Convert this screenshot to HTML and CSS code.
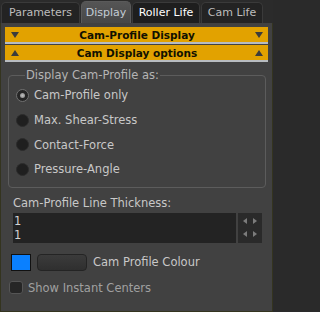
FILE: index.html
```html
<!DOCTYPE html>
<html>
<head>
<meta charset="utf-8">
<link rel="stylesheet" href="styles.css">
</head>
<body>
<div class="window">
  <div class="tabs">
    <div class="tab t-param">Parameters</div>
    <div class="tab t-display active">Display</div>
    <div class="tab t-roller hover">Roller Life</div>
    <div class="tab t-cam">Cam Life</div>
  </div>
  <div class="panel">
    <div class="bar">
      <span class="tri down"></span>
      <span class="bar-title">Cam-Profile Display</span>
      <span class="tri down"></span>
    </div>
    <div class="bar">
      <span class="tri up"></span>
      <span class="bar-title">Cam Display options</span>
      <span class="tri up"></span>
    </div>
    <fieldset class="group">
      <legend>Display Cam-Profile as:</legend>
      <div class="radio-row"><span class="radio checked"></span><span>Cam-Profile only</span></div>
      <div class="radio-row"><span class="radio"></span><span>Max. Shear-Stress</span></div>
      <div class="radio-row"><span class="radio"></span><span>Contact-Force</span></div>
      <div class="radio-row"><span class="radio"></span><span>Pressure-Angle</span></div>
    </fieldset>
    <div class="label">Cam-Profile Line Thickness:</div>
    <div class="spin-row">
      <div class="spin-input">
        <div>1</div>
        <div>1</div>
      </div>
      <div class="spin-buttons">
        <div class="arrows"><span class="arr left"></span><span class="arr right"></span></div>
        <div class="arrows"><span class="arr left"></span><span class="arr right"></span></div>
      </div>
    </div>
    <div class="colour-row">
      <span class="swatch"></span>
      <span class="colour-btn"></span>
      <span class="colour-label">Cam Profile Colour</span>
    </div>
    <div class="check-row">
      <span class="checkbox"></span>
      <span class="check-label">Show Instant Centers</span>
    </div>
  </div>
</div>
</body>
</html>
```
FILE: styles.css
```css
html, body {
  margin: 0;
  padding: 0;
  background: #2a2a2a;
}
body {
  font-family: "DejaVu Sans", sans-serif;
  font-size: 11.5px;
  color: #c8c8c8;
}
.window {
  display: flex;
  flex-direction: column;
  width: 273px;
  height: 312px;
  overflow: hidden;
}
.tabs {
  display: flex;
  height: 23px;
  box-sizing: border-box;
  padding: 2px 0 0 1px;
  gap: 1px;
  background: #2b2b2b;
}
.tab {
  flex: none;
  box-sizing: border-box;
  height: 21px;
  line-height: 20px;
  text-align: center;
  white-space: nowrap;
  font-size: 11px;
  color: #bdbdbd;
  background: #232323;
  border: 1px solid #3a3a3a;
  border-bottom: none;
  border-radius: 5px 5px 0 0;
}
.t-param { width: 79px; }
.t-display { width: 50px; }
.t-roller { width: 68px; }
.t-cam { width: 62px; }
.tab.active {
  height: 22px;
  margin-top: -1px;
  line-height: 21px;
  color: #c4ccd4;
  background: linear-gradient(#555555, #474747);
  border-color: #5a5a5a;
}
.tab.hover {
  color: #ffffff;
  background: #1e1e1e;
}
.panel {
  flex: 1;
  background: #414141;
  border: 1px solid #34341f;
  border-top: none;
  padding: 4px 4px 0 4px;
}
.bar {
  display: flex;
  align-items: center;
  height: 15px;
  background: #e2a200;
  border-bottom: 2px solid #b8bcc0;
  margin-bottom: 1px;
  padding: 0 5px 0 6px;
}
.bar-title {
  flex: 1;
  text-align: center;
  font-weight: bold;
  font-size: 10.5px;
  color: #111100;
}
.tri {
  width: 0;
  height: 0;
  border-left: 4px solid transparent;
  border-right: 4px solid transparent;
}
.tri.down {
  border-top: 6px solid #3c3c3c;
}
.tri.up {
  border-bottom: 6px solid #3c3c3c;
}
.group {
  margin: 7px 2px 0 3px;
  padding: 1px 6px 5px 7px;
  border: 1px solid #5c5c5c;
  border-radius: 4px;
}
.group legend {
  margin-left: 9px;
  padding: 0 1px;
  color: #b4b4b4;
  line-height: 13px;
}
.radio-row {
  display: flex;
  align-items: center;
  height: 24.7px;
  gap: 5px;
}
.radio {
  box-sizing: border-box;
  width: 13px;
  height: 13px;
  border-radius: 50%;
  background: #1f1f1f;
  border: 1px solid #2c2c2c;
  display: flex;
  align-items: center;
  justify-content: center;
}
.radio.checked {
  border-color: #707070;
  background: #262626;
}
.radio.checked::after {
  content: "";
  width: 5px;
  height: 5px;
  border-radius: 50%;
  background: radial-gradient(#c0c0c0, #808080);
}
.label {
  margin: 8px 0 0 8px;
  line-height: 14px;
  color: #c8c8c8;
}
.spin-row {
  display: flex;
  gap: 2px;
  margin: 3px 0 0 8px;
}
.spin-input {
  width: 223px;
  height: 30px;
  background: #232323;
  color: #d4d4d4;
  line-height: 14px;
  padding-top: 1px;
  box-sizing: border-box;
}
.spin-input div {
  padding-left: 1px;
}
.spin-buttons {
  width: 24px;
  height: 30px;
  background: #2a2a2a;
  display: flex;
  flex-direction: column;
  justify-content: center;
  gap: 7px;
}
.arrows {
  display: flex;
  justify-content: center;
  gap: 6px;
}
.arr {
  width: 0;
  height: 0;
  border-top: 3.5px solid transparent;
  border-bottom: 3.5px solid transparent;
}
.arr.left {
  border-right: 4px solid #7c7c7c;
}
.arr.right {
  border-left: 4px solid #7c7c7c;
}
.colour-row {
  display: flex;
  align-items: center;
  margin: 11px 0 0 6px;
  height: 17px;
}
.swatch {
  box-sizing: border-box;
  width: 20px;
  height: 17px;
  background: #0a80ff;
  border: 1px solid #111;
}
.colour-btn {
  box-sizing: border-box;
  width: 50px;
  height: 17px;
  margin-left: 6px;
  border: 1px solid #242424;
  border-radius: 4px;
  background: linear-gradient(#3b3b3b, #2f2f2f);
}
.colour-label {
  margin-left: 6px;
  color: #c8c8c8;
}
.check-row {
  display: flex;
  align-items: center;
  margin: 10px 0 0 4px;
  gap: 5px;
}
.checkbox {
  box-sizing: border-box;
  width: 14px;
  height: 13px;
  border-radius: 3px;
  background: #262626;
  border: 1px solid #555555;
}
.check-label {
  color: #a0a0a0;
}
```
